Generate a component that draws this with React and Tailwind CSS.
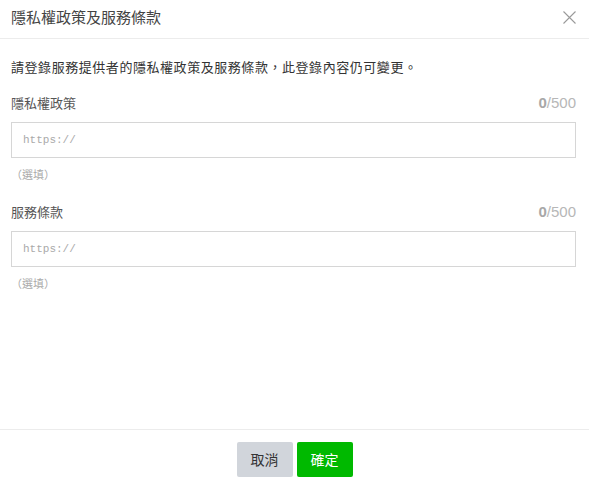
import { useState } from 'react';

const font = '[font-family:"Noto_Sans_CJK_TC","Liberation_Sans",sans-serif]';

// URL field with counter and hint
const UrlField = ({ label, value, onChange }) => (
  <div>
    <div className="flex items-center justify-between h-5">
      <span className="text-[13px] text-[#555]">{label}</span>
      <span className="text-[15px] text-[#b7b7b7] [font-family:'Liberation_Sans',sans-serif]">
        <span className="font-bold text-[#a8a8a8]">{value.length}</span>/500
      </span>
    </div>
    <input
      type="text"
      value={value}
      onChange={(e) => onChange(e.target.value)}
      placeholder="https://"
      className="mt-[9px] block w-full h-9 border border-[#d6d6d6] px-[11px] text-[11px] text-[#333] placeholder:text-[#aaa] [font-family:'Liberation_Mono',monospace] outline-none"
    />
    <div className="mt-2 h-4 leading-4 text-[11px] text-[#aaa]">（選填）</div>
  </div>
);

export default function App() {
  const [privacy, setPrivacy] = useState('');
  const [terms, setTerms] = useState('');

  return (
    <div className={`h-[489px] flex flex-col bg-white ${font}`}>
      {/* Header */}
      <div className="h-[39px] flex items-center justify-between pl-[11px] pr-[13px] pb-[3px] border-b border-[#ececec]">
        <h1 className="text-[15px] text-[#444]">隱私權政策及服務條款</h1>
        <svg width="13" height="13" viewBox="0 0 13 13">
          <path d="M0.5 0.5 L12.5 12.5 M12.5 0.5 L0.5 12.5" stroke="#9a9a9a" strokeWidth="1.1" />
        </svg>
      </div>

      {/* Body */}
      <div className="flex-1 pl-[11px] pr-[13px] pt-[18px]">
        <p className="text-[13px] leading-5 text-[#333] tracking-[0.55px]">
          請登錄服務提供者的隱私權政策及服務條款，此登錄內容仍可變更。
        </p>
        <div className="mt-4">
          <UrlField label="隱私權政策" value={privacy} onChange={setPrivacy} />
        </div>
        <div className="mt-5">
          <UrlField label="服務條款" value={terms} onChange={setTerms} />
        </div>
      </div>

      {/* Footer */}
      <div className="border-t border-[#ececec] pt-3 pb-3 flex justify-center gap-1">
        <button className="w-14 h-[35px] rounded-[2px] bg-[#d1d5db] text-[14px] text-[#333]">取消</button>
        <button className="w-14 h-[35px] rounded-[2px] bg-[#00b900] text-[14px] text-white">確定</button>
      </div>
    </div>
  );
}
